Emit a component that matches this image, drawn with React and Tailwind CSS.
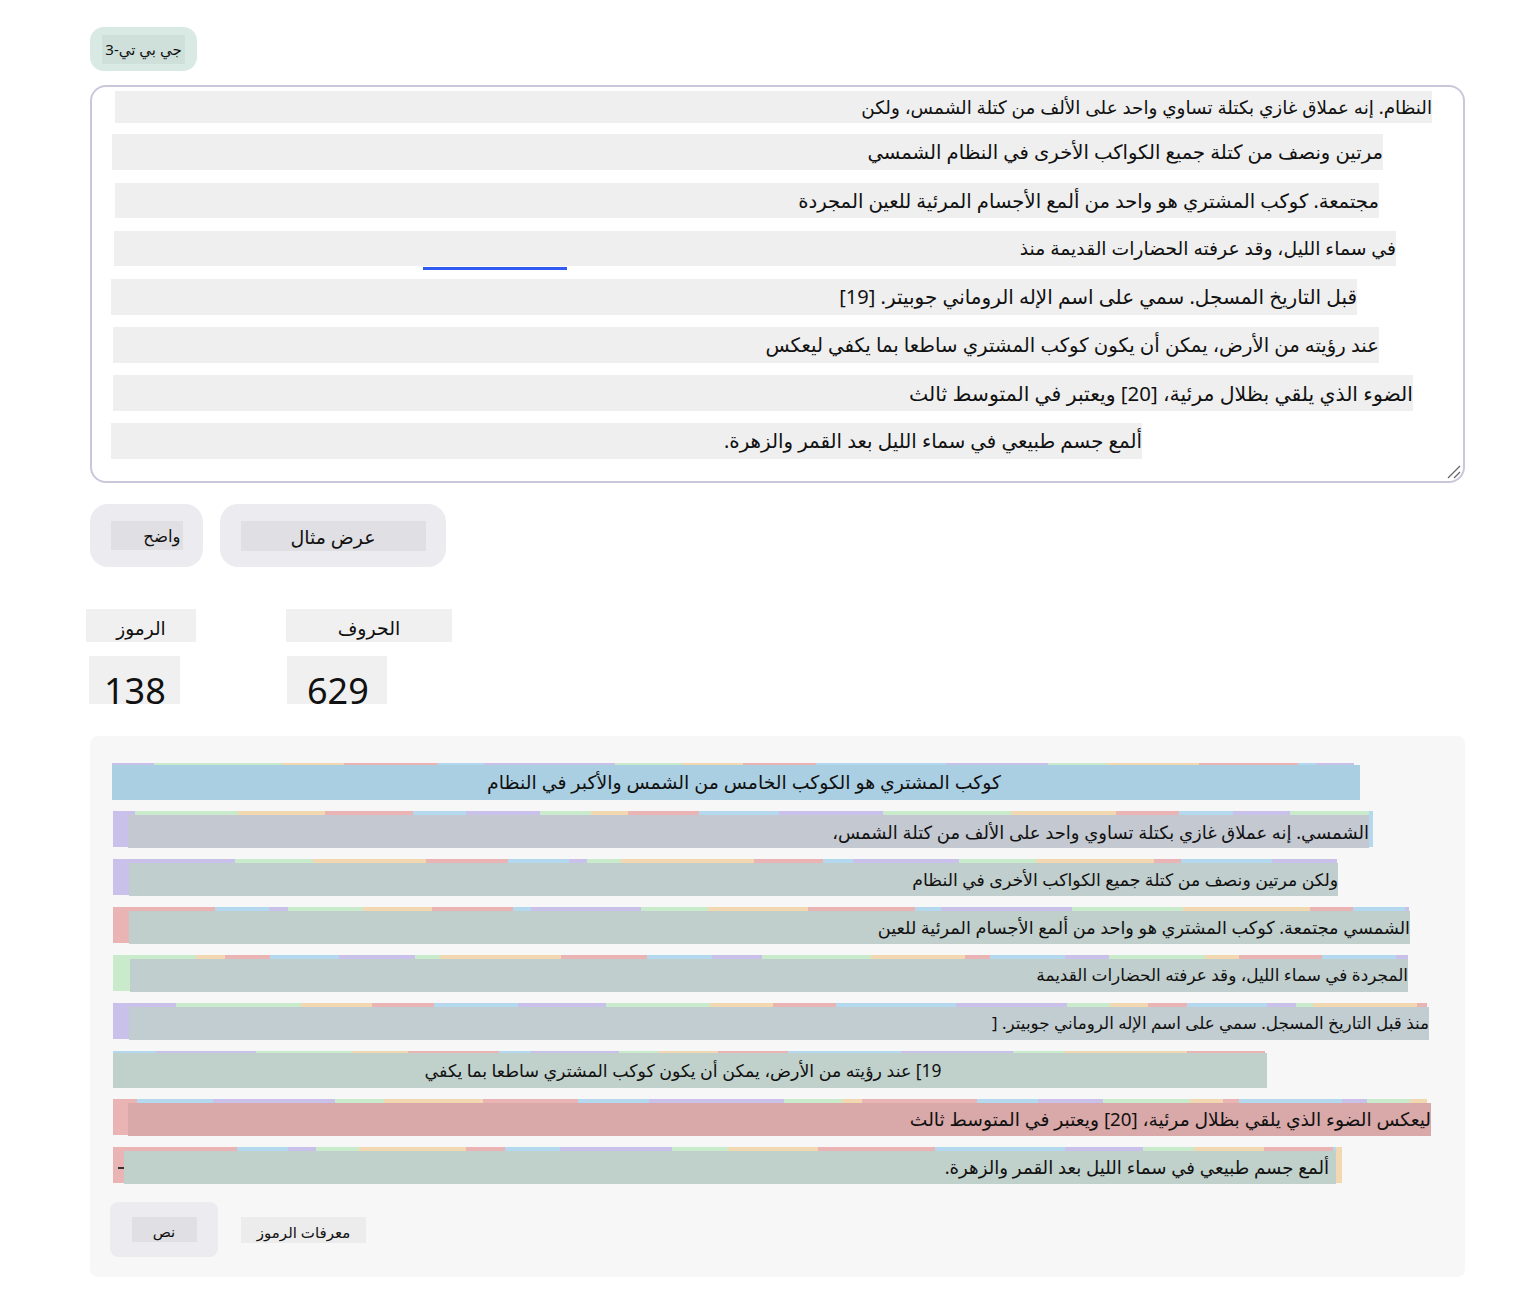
import React from "react";

const FONT = { fontFamily: '"Noto Sans", "DejaVu Sans", sans-serif' };

const COLORS = [
  "bg-[#c9c1ea]",
  "bg-[#c9eacb]",
  "bg-[#f1d8b1]",
  "bg-[#ebb4b4]",
  "bg-[#b4d9ef]",
];

function segments(seed, total, start) {
  let s = seed * 9301 + 49297;
  const out = [];
  let sum = 0;
  let i = 0;
  while (sum < total) {
    s = (s * 9301 + 49297) % 233280;
    let w = 16 + Math.floor((s / 233280) * 120);
    if (sum + w > total) w = total - sum;
    out.push({ w, c: COLORS[(start + i) % 5] });
    sum += w;
    i++;
  }
  return out;
}

const LINES = [
  { t: "النظام. إنه عملاق غازي بكتلة تساوي واحد على الألف من كتلة الشمس، ولكن", ml: 23, w: 1317, h: 32, mt: 4, fs: "text-[18.4px]" },
  { t: "مرتين ونصف من كتلة جميع الكواكب الأخرى في النظام الشمسي", ml: 20, w: 1271, h: 36, mt: 11, fs: "text-[19.6px]" },
  { t: "مجتمعة. كوكب المشتري هو واحد من ألمع الأجسام المرئية للعين المجردة", ml: 23, w: 1264, h: 35, mt: 13, fs: "text-[19.6px]" },
  { t: "في سماء الليل، وقد عرفته الحضارات القديمة منذ", ml: 22, w: 1282, h: 35, mt: 13, fs: "text-[18.8px]", blue: true },
  { t: "قبل التاريخ المسجل. سمي على اسم الإله الروماني جوبيتر. [19]", ml: 19, w: 1246, h: 36, mt: 13, fs: "text-[20px]" },
  { t: "عند رؤيته من الأرض، يمكن أن يكون كوكب المشتري ساطعا بما يكفي ليعكس", ml: 21, w: 1266, h: 36, mt: 12, fs: "text-[19.7px]" },
  { t: "الضوء الذي يلقي بظلال مرئية، [20] ويعتبر في المتوسط ثالث", ml: 21, w: 1300, h: 36, mt: 12, fs: "text-[20.4px]" },
  { t: "ألمع جسم طبيعي في سماء الليل بعد القمر والزهرة.", ml: 19, w: 1031, h: 36, mt: 12, fs: "text-[19.8px]" },
];

const ROWS = [
  { t: "كوكب المشتري هو الكوكب الخامس من الشمس والأكبر في النظام", strip: 1242, left: 0, box: 1248, right: 0, bg: "bg-[#abcfe2]", start: 0, center: true, fs: "text-[18.9px]", ml: 23, extra: "pl-[16px]" },
  { t: "الشمسي. إنه عملاق غازي بكتلة تساوي واحد على الألف من كتلة الشمس،", strip: 1260, left: 15, box: 1241, right: 4, rightC: "bg-[#b4d9ef]", bg: "bg-[#c4c8d1]", start: 0, fs: "text-[18px]", ml: 24 },
  { t: "ولكن مرتين ونصف من كتلة جميع الكواكب الأخرى في النظام", strip: 1224, left: 16, box: 1209, right: 0, bg: "bg-[#c0cecd]", start: 0, fs: "text-[17.3px]", ml: 24 },
  { t: "الشمسي مجتمعة. كوكب المشتري هو واحد من ألمع الأجسام المرئية للعين", strip: 1296, left: 16, box: 1281, right: 0, bg: "bg-[#c0cecc]", start: 3, fs: "text-[17.7px]", ml: 24 },
  { t: "المجردة في سماء الليل، وقد عرفته الحضارات القديمة", strip: 1295, left: 17, box: 1278, right: 0, bg: "bg-[#c0cecd]", start: 1, fs: "text-[16.9px]", ml: 24 },
  { t: "منذ قبل التاريخ المسجل. سمي على اسم الإله الروماني جوبيتر. [", strip: 1314, left: 16, box: 1300, right: 0, bg: "bg-[#c2cdd2]", start: 0, fs: "text-[16.8px]", ml: 24 },
  { t: "19] عند رؤيته من الأرض، يمكن أن يكون كوكب المشتري ساطعا بما يكفي", strip: 1152, left: 0, box: 1154, right: 0, bg: "bg-[#c0d0ca]", start: 4, center: true, fs: "text-[17.4px]", ml: 24, extra: "pr-[14px]" },
  { t: "ليعكس الضوء الذي يلقي بظلال مرئية، [20] ويعتبر في المتوسط ثالث", strip: 1314, left: 15, box: 1303, right: 0, bg: "bg-[#d9a8a8]", start: 3, fs: "text-[18.7px]", ml: 24 },
  { t: "ألمع جسم طبيعي في سماء الليل بعد القمر والزهرة.", strip: 1229, left: 11, box: 1212, right: 6, rightC: "bg-[#f1d8b1]", bg: "bg-[#c0d0ca]", start: 3, fs: "text-[18.2px]", ml: 24, dash: true, extra: "pr-[7px]" },
];

function TokenRow({ r, i }) {
  const segs = segments(i + 3, r.strip, r.start);
  return (
    <div className="flex flex-col items-start" style={{ marginLeft: r.ml - 1 }}>
      <div className="relative">
        <div className="flex h-[4px]" style={{ width: r.strip }}>
          {segs.map((s, k) => (
            <div key={k} className={`h-full ${s.c}`} style={{ width: s.w }} />
          ))}
        </div>
        <div className="flex h-[33px]">
          {r.left > 0 && (
            <div className={`relative h-[32px] ${COLORS[r.start]}`} style={{ width: r.left }}>
              {r.dash && <div className="absolute left-[5px] top-[16px] h-[2px] w-[6px] bg-[#333]" />}
            </div>
          )}
          <div
            dir="rtl"
            className={`flex h-[33px] items-center ${r.bg} ${r.fs} text-[#111] ${r.center ? "justify-center" : "justify-start"} ${r.extra || ""} leading-none ${r.left === 0 ? "-mt-[2px] h-[35px]" : ""}`}
            style={{ width: r.box }}
          >
            <span className="whitespace-nowrap">{r.t}</span>
          </div>
          {r.right > 0 && <div className={`-mt-[4px] h-[36px] ${r.rightC}`} style={{ width: r.right }} />}
        </div>
      </div>
    </div>
  );
}

export default function App() {
  return (
    <div className="min-h-[1292px] w-[1528px] bg-white text-[#111]" style={FONT}>
      <div className="ml-[90px] w-[1375px] pt-[27px] pb-[15px]">
        {/* model selector */}
        <div className="flex h-[44px] w-[107px] items-center justify-center rounded-[14px] bg-[#d9e9e3]">
          <div className="flex h-[29px] w-[83px] items-center justify-center bg-[#cfe0da] text-[15px]" dir="rtl">
            جي بي تي-3
          </div>
        </div>

        {/* textarea */}
        <div className="relative mt-[14px] h-[398px] w-[1375px] rounded-[16px] border-2 border-[#c9c7da] bg-white">
          {LINES.map((l, i) => (
            <div key={i} className="relative" style={{ marginLeft: l.ml, marginTop: l.mt, width: l.w }}>
              <div
                dir="rtl"
                className={`flex items-center bg-[#efefef] ${l.fs} leading-none text-[#111]`}
                style={{ height: l.h }}
              >
                <span className="whitespace-nowrap">{l.t}</span>
              </div>
              {l.blue && <div className="absolute left-[309px] top-[36px] h-[3px] w-[144px] bg-[#2f5bf0]" />}
            </div>
          ))}
          <svg className="absolute bottom-[1px] right-[1px]" width="16" height="16" viewBox="0 0 16 16">
            <line x1="2" y1="14" x2="14" y2="2" stroke="#666" strokeWidth="1.3" />
            <line x1="8" y1="14" x2="14" y2="8" stroke="#666" strokeWidth="1.3" />
          </svg>
        </div>

        {/* buttons */}
        <div className="mt-[21px] flex gap-[17px]">
          <div className="flex h-[63px] w-[113px] items-center justify-center rounded-[18px] bg-[#ececf0]">
            <div className="flex h-[29px] w-[72px] items-center justify-start bg-[#e0e0e4] pr-[2px] pt-[2px] text-[16.5px]" dir="rtl">
              واضح
            </div>
          </div>
          <div className="flex h-[63px] w-[226px] items-center justify-center rounded-[18px] bg-[#ececf0]">
            <div className="flex h-[30px] w-[185px] items-center justify-center bg-[#e0e0e4] pt-[4px] text-[19px]" dir="rtl">
              عرض مثال
            </div>
          </div>
        </div>

        {/* stats */}
        <div className="mt-[42px] flex gap-[90px] -ml-[4px]">
          <div className="flex flex-col items-start">
            <div className="flex h-[33px] w-[110px] items-end justify-center bg-[#f0f0f0] text-[18.5px] leading-[28px]" dir="rtl">
              الرموز
            </div>
            <div className="ml-[3px] mt-[14px] h-[48px] w-[91px] bg-[#f0f0f0] pl-[15px] pt-[17px] text-[36px] leading-[36px]">
              138
            </div>
          </div>
          <div className="flex flex-col items-start">
            <div className="flex h-[33px] w-[166px] items-end justify-center bg-[#f0f0f0] text-[19px] leading-[28px]" dir="rtl">
              الحروف
            </div>
            <div className="ml-[1px] mt-[14px] h-[48px] w-[100px] bg-[#f0f0f0] pl-[20px] pt-[17px] text-[36px] leading-[36px]">
              629
            </div>
          </div>
        </div>

        {/* tokens panel */}
        <div className="mt-[32px] h-[541px] w-[1375px] rounded-[8px] bg-[#f7f7f7] pt-[27px]">
          <div className="flex flex-col gap-[11px]">
            {ROWS.map((r, i) => (
              <TokenRow key={i} r={r} i={i} />
            ))}
          </div>
          <div className="ml-[20px] mt-[18px] flex items-center gap-[23px]">
            <div className="flex h-[55px] w-[108px] items-center justify-center rounded-[8px] bg-[#ececf0]">
              <div className="flex h-[25px] w-[65px] items-end justify-center bg-[#e0e0e4] text-[15px] leading-[22px]" dir="rtl">
                نص
              </div>
            </div>
            <div className="flex h-[26px] w-[125px] items-end justify-center bg-[#ececec] text-[15px] leading-[22px]" dir="rtl">
              معرفات الرموز
            </div>
          </div>
        </div>
      </div>
    </div>
  );
}
